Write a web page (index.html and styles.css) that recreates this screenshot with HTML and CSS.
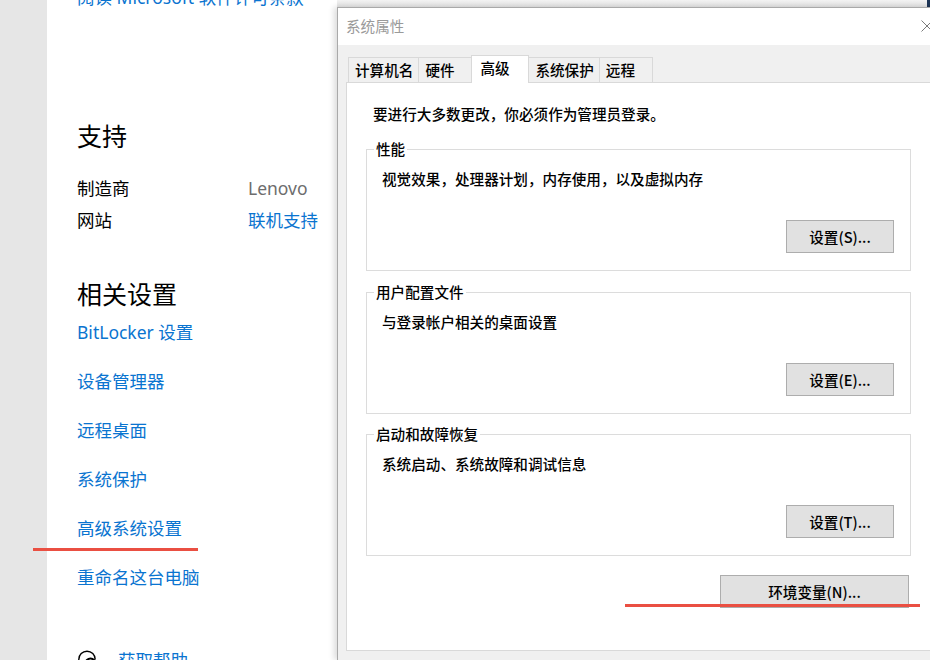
FILE: index.html
```html
<!DOCTYPE html>
<html lang="zh-CN">
<head>
<meta charset="utf-8">
<title>系统属性</title>
<link rel="stylesheet" href="styles.css">
</head>
<body>
<div class="screen">
  <section class="settings">
    <div class="nav"></div>
    <div class="content">
      <a class="link top-link">阅读 Microsoft 软件许可条款</a>
      <h2 class="heading h-support">支持</h2>
      <div class="kv first"><span class="k">制造商</span><span class="v">Lenovo</span></div>
      <div class="kv"><span class="k">网站</span><a class="link">联机支持</a></div>
      <h2 class="heading h-related">相关设置</h2>
      <ul class="links">
        <li><a class="link">BitLocker 设置</a></li>
        <li><a class="link">设备管理器</a></li>
        <li><a class="link">远程桌面</a></li>
        <li><a class="link">系统保护</a></li>
        <li><a class="link marked">高级系统设置</a></li>
        <li><a class="link">重命名这台电脑</a></li>
      </ul>
      <div class="help">
        <svg class="help-icon" viewBox="0 0 20 20" width="20" height="20">
          <path d="M10 1.2a8.2 8.2 0 1 0 0 16.4" fill="none" stroke="#000" stroke-width="1.4"/>
          <path d="M10 1.2a8.2 8.2 0 0 1 8.2 8.2" fill="none" stroke="#000" stroke-width="1.4"/>
          <circle cx="13.5" cy="13.5" r="6" fill="#000"/>
          <path d="M11.6 12a1.9 1.9 0 1 1 2.6 1.8c-.5.2-.7.5-.7 1v.5" fill="none" stroke="#fff" stroke-width="1.3"/>
        </svg>
        <a class="link">获取帮助</a>
      </div>
    </div>
  </section>

  <section class="right">
    <div class="behind"><span class="behind-accent"></span></div>
    <div class="dialog">
      <div class="titlebar">
        <span class="title">系统属性</span>
        <svg class="close" viewBox="0 0 12 12" width="12" height="12">
          <path d="M0.5 0.5L11.5 11.5M11.5 0.5L0.5 11.5" stroke="#7a7a7a" stroke-width="1" fill="none"/>
        </svg>
      </div>
      <div class="dlg-body">
        <div class="tabs">
          <div class="tab">计算机名</div>
          <div class="tab">硬件</div>
          <div class="tab active">高级</div>
          <div class="tab">系统保护</div>
          <div class="tab">远程</div>
        </div>
        <div class="panel">
          <p class="intro">要进行大多数更改，你必须作为管理员登录。</p>

          <div class="group g1">
            <div class="group-label">性能</div>
            <p class="group-text">视觉效果，处理器计划，内存使用，以及虚拟内存</p>
            <div class="group-actions"><button class="btn">设置(S)...</button></div>
          </div>

          <div class="group g2">
            <div class="group-label">用户配置文件</div>
            <p class="group-text">与登录帐户相关的桌面设置</p>
            <div class="group-actions"><button class="btn">设置(E)...</button></div>
          </div>

          <div class="group g3">
            <div class="group-label">启动和故障恢复</div>
            <p class="group-text">系统启动、系统故障和调试信息</p>
            <div class="group-actions"><button class="btn">设置(T)...</button></div>
          </div>

          <div class="env-row">
            <button class="btn btn-env">环境变量(N)...</button>
            <span class="env-mark"></span>
          </div>
        </div>
      </div>
    </div>
  </section>

  <div class="watermark">CSDN @laufing</div>
</div>
</body>
</html>
```

FILE: styles.css
```css
* { box-sizing: border-box; }
html, body { margin: 0; padding: 0; }
body {
  background: #fff;
  font-family: "Noto Sans", "Noto Sans CJK SC", sans-serif;
}

.screen {
  position: relative;
  display: flex;
  width: 930px;
  height: 660px;
  overflow: hidden;
  background: #fff;
}

/* ---------- Settings window (behind) ---------- */
.settings {
  flex: none;
  width: 337px;
  height: 100%;
  display: flex;
}
.nav {
  flex: none;
  width: 47px;
  background: #e6e6e6;
}
.content {
  flex: 1;
  background: #fff;
  padding-left: 30px;
  font-size: 17.5px;
  color: #000;
}
.link {
  color: #0a74d0;
  text-decoration: none;
}
.top-link {
  display: block;
  margin-top: -15px;
  line-height: 24px;
  white-space: nowrap;
}
.heading {
  margin: 0;
  font-weight: 400;
  font-size: 25px;
  line-height: 34px;
  color: #000;
}
.h-support { margin-top: 110px; }
.h-related { margin-top: 41px; }

.kv {
  display: flex;
  line-height: 32px;
}
.kv.first { margin-top: 19px; }
.k { width: 171px; }
.v { color: #6d6d6d; }

.links {
  list-style: none;
  margin: 9px 0 0;
  padding: 0;
}
.links li { line-height: 24px; }
.links li + li { margin-top: 25px; }
.links .link { display: inline-block; line-height: 24px; }

.marked { position: relative; }
.marked::after {
  content: "";
  position: absolute;
  left: -44px;
  top: 32px;
  width: 165px;
  height: 3px;
  background: #ea4f42;
}

.help {
  display: flex;
  align-items: center;
  gap: 21px;
  margin-top: 59px;
  line-height: 24px;
}
.help-icon { flex: none; display: block; }

/* ---------- Dialog ---------- */
.right {
  flex: none;
  width: 602px;
  height: 100%;
  display: flex;
  flex-direction: column;
  position: relative;
  z-index: 1;
}
.behind {
  flex: none;
  height: 7px;
  background: linear-gradient(#f3f3f3, #e2e2e2);
  display: flex;
  justify-content: flex-end;
  padding-right: 9px;
}
.behind-accent {
  width: 3px;
  background: #1d3556;
}
.dialog {
  flex: 1;
  border-top: 1px solid #a9a9a9;
  border-left: 1px solid #a9a9a9;
  background: #f0f0f0;
  box-shadow: -3px 0 6px rgba(0, 0, 0, 0.14);
  font-family: "Noto Sans CJK SC", sans-serif;
  font-size: 14.6px;
  font-weight: 500;
  color: #000;
}
.titlebar {
  height: 37px;
  background: #fff;
  display: flex;
  align-items: center;
  padding: 0 0 2px 8px;
}
.title {
  color: #9a9a9a;
  font-weight: 400;
  line-height: 20px;
}
.close {
  display: block;
  margin-left: auto;
  margin-right: 6px;
}

.dlg-body {
  padding: 10px 8px 0;
}
.tabs {
  display: flex;
  align-items: flex-end;
  height: 27px;
  padding-left: 2px;
  position: relative;
  z-index: 1;
}
.tab {
  height: 25px;
  min-width: 54px;
  padding: 0 5px 0 6px;
  margin-right: -1px;
  border: 1px solid #d9d9d9;
  border-bottom: 0;
  background: #f0f0f0;
  line-height: 24px;
  white-space: nowrap;
}
.tab.active {
  height: 28px;
  min-width: 58px;
  margin-bottom: -1px;
  padding: 0 8px;
  background: #fff;
  position: relative;
  z-index: 2;
}

.panel {
  height: 569px;
  border: 1px solid #d9d9d9;
  background: #fff;
}
.intro {
  margin: 21px 0 0 26px;
  line-height: 20px;
}

.group {
  width: 545px;
  margin-left: 19px;
  border: 1px solid #dcdcdc;
  padding-bottom: 17px;
}
.g1 { margin-top: 25px; }
.g2 { margin-top: 21px; }
.g3 { margin-top: 20px; }
.group-label {
  width: fit-content;
  margin: -11px 0 0 7px;
  padding: 0 2px;
  background: #fff;
  line-height: 20px;
}
.group-text {
  margin: 10px 0 0 15px;
  line-height: 20px;
}
.group-actions {
  display: flex;
  justify-content: flex-end;
  margin-top: 31px;
  padding-right: 16px;
}

.btn {
  width: 108px;
  height: 33px;
  padding: 0;
  border: 1px solid #adadad;
  background: #e1e1e1;
  color: #000;
  font: inherit;
  line-height: 20px;
}

.env-row {
  position: relative;
  display: flex;
  justify-content: flex-end;
  margin-top: 19px;
  padding-right: 21px;
}
.btn-env { width: 189px; }
.env-mark {
  position: absolute;
  left: 278px;
  top: 29px;
  width: 295px;
  height: 3px;
  background: #ea4f42;
}

.watermark {
  position: absolute;
  left: 829px;
  top: 636px;
  font-family: "Liberation Sans", sans-serif;
  font-size: 12.2px;
  line-height: 16px;
  color: #a9a9a9;
  white-space: nowrap;
}
```
